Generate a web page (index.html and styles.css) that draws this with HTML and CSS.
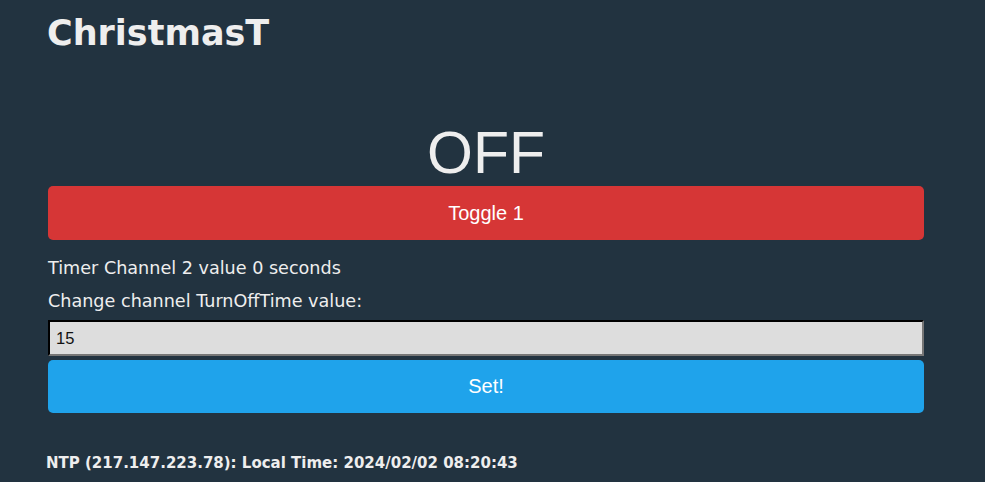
FILE: index.html
```html
<!DOCTYPE html>
<html lang="en">

<head>
    <meta charset="UTF-8">
    <meta name="viewport" content="width=device-width, initial-scale=1.0">
    <title>ChristmasT</title>
    <link rel="stylesheet" href="styles.css">
</head>

<body>
    <div class="page">
        <h1 class="title">ChristmasT</h1>

        <div class="state">OFF</div>
        <button class="btn btn-toggle">Toggle 1</button>

        <p class="label">Timer Channel 2 value 0 seconds</p>
        <p class="label">Change channel TurnOffTime value:</p>
        <input class="value-input" type="text" value="15">
        <button class="btn btn-set">Set!</button>

        <p class="ntp">NTP (217.147.223.78): Local Time: 2024/02/02 08:20:43</p>
    </div>
</body>

</html>
```

FILE: styles.css
```css
body {
    margin: 0;
    background-color: #223340;
    color: #eeeeee;
    font-family: 'DejaVu Sans', Verdana, sans-serif;
}

.page {
    width: 876px;
    padding: 0 61px 0 48px;
}

.title {
    margin: 0 0 0 -1px;
    padding-top: 13px;
    font-size: 35px;
    font-weight: bold;
    height: 71px;
}

.state {
    margin-top: 36px;
    font-family: 'Liberation Sans', Arial, sans-serif;
    font-size: 59px;
    text-align: center;
    line-height: 66px;
}

.btn {
    display: block;
    width: 100%;
    border: none;
    border-radius: 5px;
    color: white;
    font-family: 'Liberation Sans', Arial, sans-serif;
    font-size: 20px;
    cursor: pointer;
}

.btn-toggle {
    height: 54px;
    background-color: #d63636;
}

.btn-set {
    height: 53px;
    margin-top: 4px;
    background-color: #1fa3eb;
}

.label {
    margin: 0;
    font-size: 17.6px;
    line-height: 33px;
}

.label:first-of-type {
    margin-top: 12px;
}

.value-input {
    display: block;
    box-sizing: border-box;
    width: 100%;
    height: 36px;
    margin-top: 2px;
    padding: 0 6px;
    background-color: #dddddd;
    border: 2px inset #767676;
    border-top-color: #222;
    border-left-color: #222;
    font-family: 'Liberation Sans', Arial, sans-serif;
    font-size: 16.5px;
    color: #111;
}

.ntp {
    margin: 41px 0 0 -2px;
    font-size: 15px;
    font-weight: bold;
}
```
